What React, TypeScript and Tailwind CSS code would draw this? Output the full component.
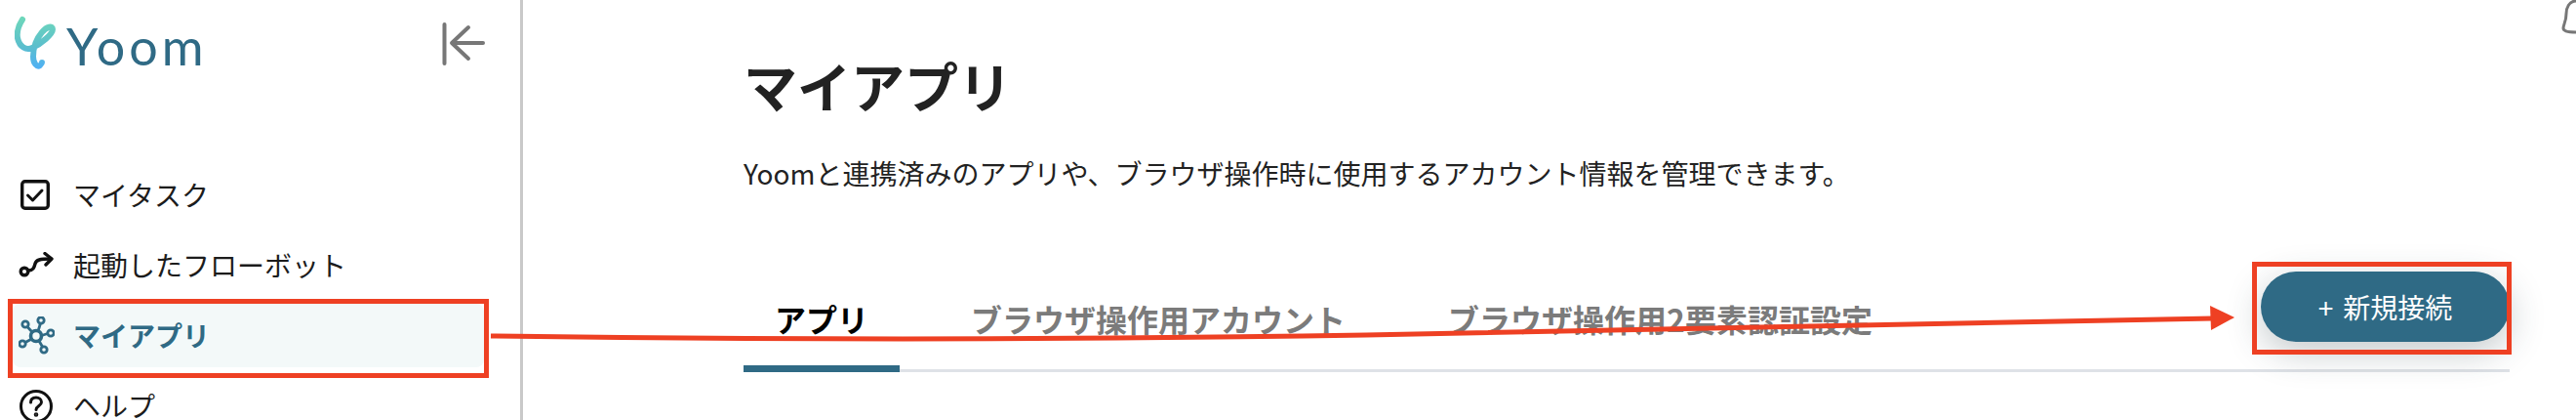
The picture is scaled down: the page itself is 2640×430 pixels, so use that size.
import React from "react";

const FONT = "font-['Hiragino_Sans','Noto_Sans_CJK_JP','Noto_Sans',sans-serif]";

function Logo() {
  return (
    <svg width="44" height="60" viewBox="0 0 44 60" fill="none" className="shrink-0">
      <defs>
        <linearGradient id="yl" gradientUnits="userSpaceOnUse" x1="0" y1="2" x2="0" y2="56">
          <stop offset="0" stopColor="#6fd8ba" />
          <stop offset="0.55" stopColor="#5bbfcc" />
          <stop offset="1" stopColor="#4fb0f6" />
        </linearGradient>
      </defs>
      <path
        d="M8 5C4 11 2 18 3 24C5 33 12 37 18 34C27 30 39 20 39 15C39 11 33 12 28 18C22 25 19 35 19 43C19 50 23 54 26 52C27 51 28 50 28 49"
        stroke="url(#yl)"
        strokeWidth="6"
        strokeLinecap="round"
        strokeLinejoin="round"
      />
    </svg>
  );
}

function Collapse() {
  return (
    <svg width="44" height="44" viewBox="0 0 44 44" fill="none" stroke="#777" strokeWidth="4" strokeLinecap="round" strokeLinejoin="round">
      <path d="M2.500 2V42" />
      <path d="M42 21H11" />
      <path d="M27 5L10 21L27 37" />
    </svg>
  );
}

function TaskIcon() {
  return (
    <svg width="30" height="31" viewBox="0 0 30 31" fill="none" stroke="#111" strokeLinecap="round" strokeLinejoin="round" className="-ml-[2px]">
      <rect x="1.700" y="1.700" width="26.600" height="27.600" rx="3" strokeWidth="3.400" />
      <path d="M7.500 16L12.500 21L22 11" strokeWidth="3" />
    </svg>
  );
}

function RouteIcon() {
  return (
    <svg width="36" height="27" viewBox="0 0 36 27" fill="none" stroke="#111" strokeWidth="3.400" strokeLinecap="round" strokeLinejoin="round">
      <circle cx="6" cy="20" r="3.800" />
      <path d="M10 19C15 19 16 16 17 12C18 8 22 7 33 7" />
      <path d="M27 1.500L34 7L28 13" />
    </svg>
  );
}

function HubIcon() {
  const nodes = [
    [7, 8],
    [23, 4],
    [33, 17],
    [26, 34],
    [4, 28],
  ];
  return (
    <svg width="37" height="39" viewBox="0 0 37 39" fill="none" stroke="#2f6a85" strokeWidth="2.800">
      <circle cx="18" cy="20" r="5.500" strokeWidth="3.600" />
      <path d="M9 10.500L14 16M22.500 7L20 15M30 17.500L23.500 19.500M24.500 31L21 25M7 26.500L13.500 23" />
      {nodes.map(([x, y]) => (
        <circle key={`${x}-${y}`} cx={x} cy={y} r="3.200" />
      ))}
    </svg>
  );
}

function HelpIcon() {
  return (
    <svg width="34" height="34" viewBox="0 0 34 34" fill="none" stroke="#111" strokeWidth="3" strokeLinecap="round">
      <circle cx="17" cy="17" r="15.500" />
      <path d="M11.500 13C11.500 9.500 14 8 17 8C20 8 22.500 10 22.500 12.800C22.500 16.500 17 16.500 17 20.500" />
      <circle cx="17" cy="25.500" r="0.800" fill="#111" />
    </svg>
  );
}

function NavItem({ icon, label, active }: { icon: React.ReactNode; label: string; active?: boolean }) {
  return (
    <div className={`flex h-[65px] items-center rounded-lg pl-[5px] ${active ? "bg-[#f3f9f9]" : ""}`}>
      <span className="mr-[19px] flex w-[38px] shrink-0 justify-center">{icon}</span>
      <span className={`pb-[2px] text-[28px] leading-none ${active ? "font-bold text-[#2f6a85]" : "text-[#1c1c1c]"}`}>{label}</span>
    </div>
  );
}

function Tab({ label, active }: { label: string; active?: boolean }) {
  return (
    <div className={`-mb-[3px] mt-[28px] flex h-[75px] items-start rounded-t-[6px] border-b-[7px] px-[32px] ${active ? "border-[#2f6a85]" : "border-transparent"}`}>
      <span className={`text-[32px] font-bold leading-[40px] ${active ? "text-black" : "text-[#7b7b7b]"}`}>{label}</span>
    </div>
  );
}

export default function App() {
  return (
    <div className={`relative flex h-[430px] w-[2640px] overflow-hidden bg-white ${FONT}`}>
      <aside className="h-full w-[536px] shrink-0 border-r-[3px] border-[#c9c9c9]">
        <div className="flex h-[75px] items-start justify-between pl-[15px] pr-[36px] pt-[15px]">
          <div className="flex items-start gap-[9px]">
            <Logo />
            <span className="pt-[2px] font-['Lato',sans-serif] text-[52px] font-normal leading-[60px] tracking-[4px] text-[#2f6a85]">Yoom</span>
          </div>
          <div className="pt-[8px]">
            <Collapse />
          </div>
        </div>
        <nav className="mt-[92px] flex flex-col gap-[7px] pl-[13px] pr-[37px]">
          <NavItem icon={<TaskIcon />} label="マイタスク" />
          <NavItem icon={<RouteIcon />} label="起動したフローボット" />
          <NavItem icon={<HubIcon />} label="マイアプリ" active />
          <NavItem icon={<HelpIcon />} label="ヘルプ" />
        </nav>
      </aside>

      <main className="w-[2036px] pl-[226px]">
        <h1 className="mt-[51px] text-[55px] font-bold leading-[70px] text-[#222]">マイアプリ</h1>
        <p className="mt-[36px] text-[28px] leading-[40px] text-[#222]">Yoomと連携済みのアプリや、ブラウザ操作時に使用するアカウント情報を管理できます。</p>
        <div className="mt-[81px] flex w-[1810px] items-start justify-between border-b-[3px] border-[#dfe2e7]">
          <div className="flex gap-[41px]">
            <Tab label="アプリ" active />
            <Tab label="ブラウザ操作用アカウント" />
            <Tab label="ブラウザ操作用2要素認証設定" />
          </div>
          <button className="mb-[28px] flex h-[72px] w-[255px] items-center justify-center gap-[10px] rounded-full bg-[#2f6a85] text-[28px] text-white shadow-[0_10px_36px_rgba(40,60,70,0.28)]">
            <span>+</span>
            <span>新規接続</span>
          </button>
        </div>
      </main>

      <svg className="absolute right-0 top-0" width="15" height="40" viewBox="0 0 15 40" fill="none" stroke="#777" strokeWidth="3">
        <path d="M15 1C8 1 5 8 5 14C5 22 2 25 2 29C2 32 8 33 15 33" strokeLinejoin="round" />
      </svg>

      <div className="pointer-events-none absolute left-[8px] top-[306px] h-[81px] w-[493px] border-[5px] border-[#ee4023]" />
      <div className="pointer-events-none absolute left-[2308px] top-[268px] h-[95px] w-[266px] border-[5px] border-[#ee4023]" />
      <svg className="pointer-events-none absolute left-0 top-0" width="2640" height="430" viewBox="0 0 2640 430" fill="none">
        <path d="M503 344C800 348 1100 348 1400 343C1800 336 2050 329 2268 326" stroke="#ee4023" strokeWidth="5" />
        <path d="M2265 313L2290 325L2266 338Z" fill="#ee4023" />
      </svg>
    </div>
  );
}
